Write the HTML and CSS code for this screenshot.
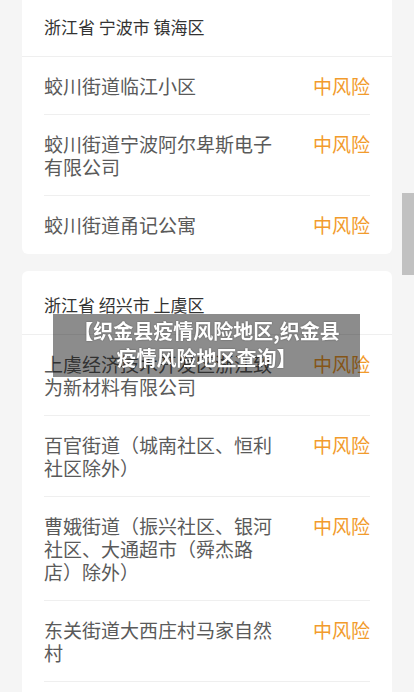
FILE: index.html
```html
<!DOCTYPE html>
<html lang="zh-CN">
<head>
    <meta http-equiv="Content-Type" content="text/html; charset=UTF-8">
    <title>织金县疫情风险地区查询</title>
    <link rel="stylesheet" href="styles.css">
</head>
<body>
    <div class="list">
        <!-- 宁波 镇海 -->
        <div class="card">
            <div class="card-head">浙江省 宁波市 镇海区</div>
            <div class="row">
                <div class="place">蛟川街道临江小区</div>
                <div class="risk">中风险</div>
            </div>
            <div class="row">
                <div class="place">蛟川街道宁波阿尔卑斯电子有限公司</div>
                <div class="risk">中风险</div>
            </div>
            <div class="row">
                <div class="place">蛟川街道甬记公寓</div>
                <div class="risk">中风险</div>
            </div>
        </div>

        <!-- 绍兴 上虞 -->
        <div class="card">
            <div class="card-head">浙江省 绍兴市 上虞区</div>
            <div class="row">
                <div class="place">上虞经济技术开发区浙江致为新材料有限公司</div>
                <div class="risk">中风险</div>
            </div>
            <div class="row">
                <div class="place">百官街道（城南社区、恒利社区除外）</div>
                <div class="risk">中风险</div>
            </div>
            <div class="row">
                <div class="place">曹娥街道（振兴社区、银河社区、大通超市（舜杰路店）除外）</div>
                <div class="risk">中风险</div>
            </div>
            <div class="row">
                <div class="place">东关街道大西庄村马家自然村</div>
                <div class="risk">中风险</div>
            </div>
            <div class="row">
                <div class="place">道墟街道称山村</div>
                <div class="risk">中风险</div>
            </div>
        </div>
    </div>

    <!-- title banner over the page -->
    <div class="banner">【织金县疫情风险地区,织金县疫情风险地区查询】</div>

    <div class="scroll-thumb"></div>
</body>
</html>
```

FILE: styles.css
```css
/* General Reset */
* {
    margin: 0;
    padding: 0;
    box-sizing: border-box;
    font-family: "Noto Sans CJK SC", "Noto Sans", sans-serif;
}

body {
    background-color: #f5f5f5;
    overflow: hidden;
}

/* page is shown scrolled a little */
.list {
    margin-top: -7px;
    padding: 0 22px;
    display: flex;
    flex-direction: column;
    gap: 17px;
}

.card {
    background-color: #ffffff;
    border-radius: 6px;
}

.card-head {
    padding: 22px 22px 17px;
    font-size: 17px;
    line-height: 24px;
    color: #333333;
    border-bottom: 1px solid #efefef;
}

.row {
    margin: 0 22px;
    padding: 17px 0;
    display: flex;
    justify-content: space-between;
    align-items: flex-start;
    border-bottom: 1px solid #efefef;
}

.row:last-child {
    padding-bottom: 18px;
    border-bottom: none;
}

.place {
    width: 236px;
    font-size: 19px;
    line-height: 23px;
    color: #5a5a5a;
}

.risk {
    font-size: 19px;
    line-height: 23px;
    color: #f29b2c;
}

/* Banner */
.banner {
    position: fixed;
    left: 53px;
    top: 314px;
    width: 307px;
    height: 63px;
    padding: 3px 14px 0;
    background-color: rgba(0, 0, 0, 0.45);
    color: #ffffff;
    font-size: 20px;
    font-weight: bold;
    line-height: 27px;
    text-align: center;
    text-shadow: 0 0 2px rgba(0, 0, 0, 0.4);
}

.scroll-thumb {
    position: fixed;
    right: 0;
    top: 193px;
    width: 12px;
    height: 82px;
    background-color: #c1c1c1;
}
```
